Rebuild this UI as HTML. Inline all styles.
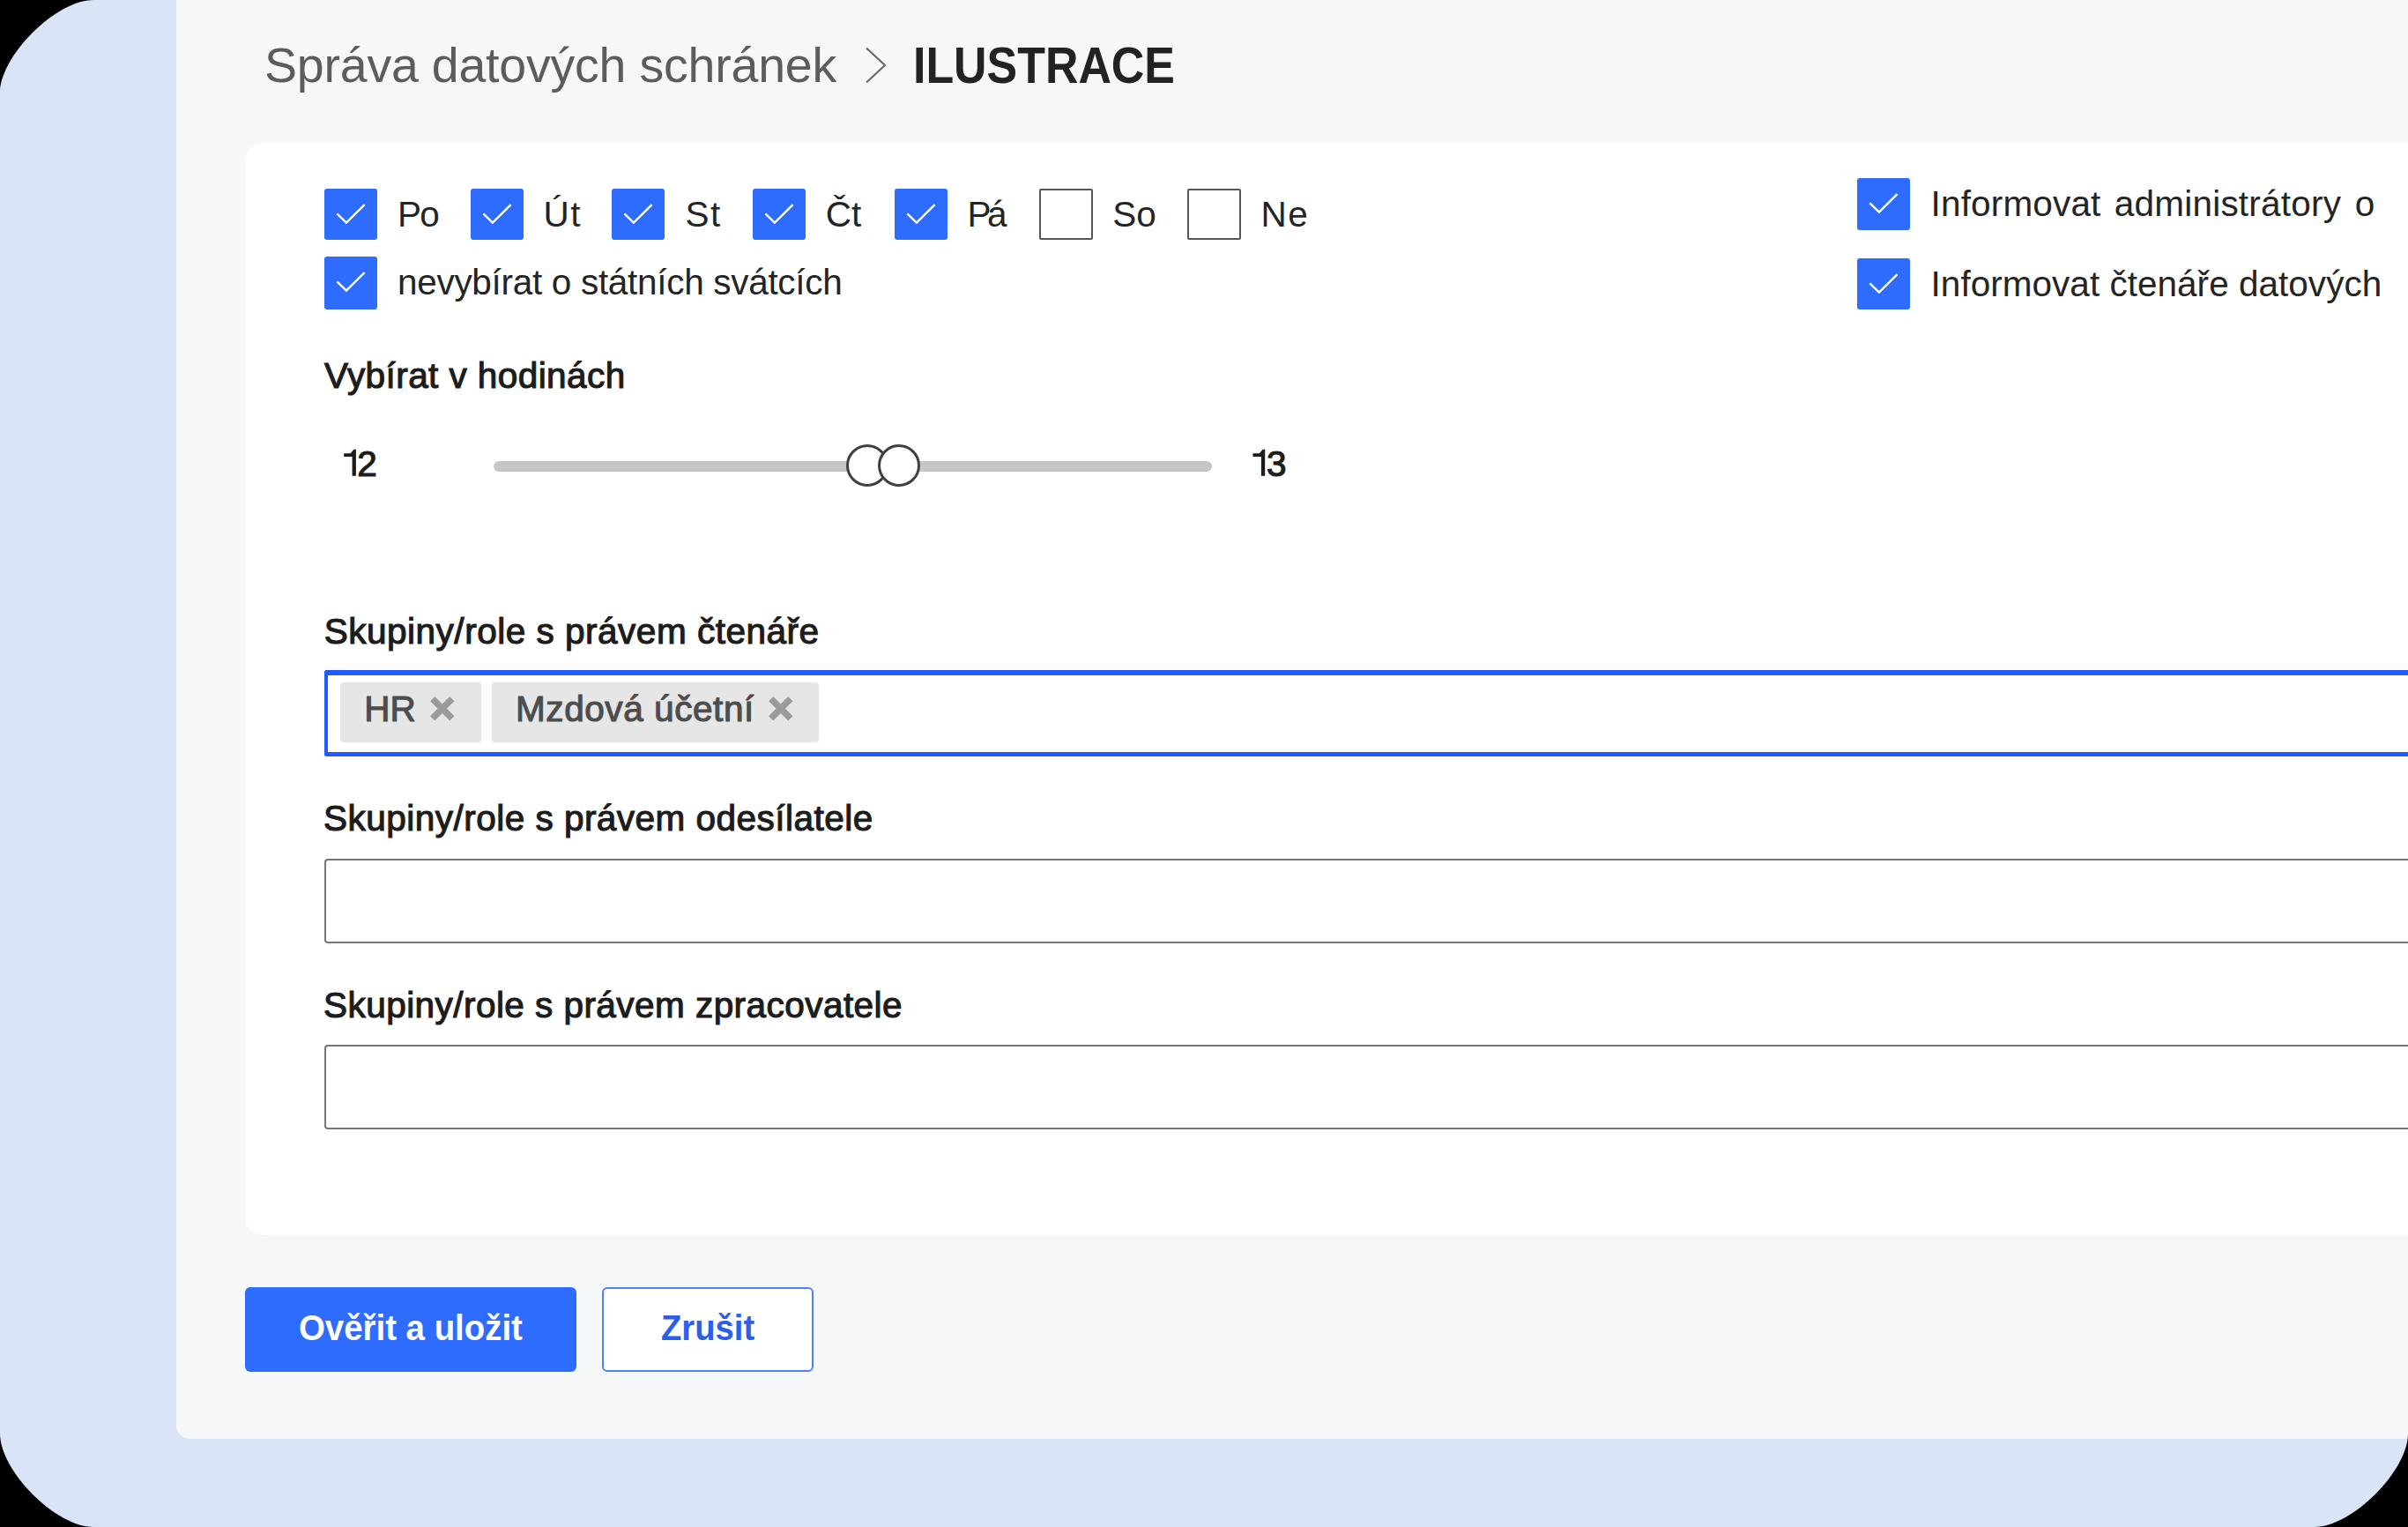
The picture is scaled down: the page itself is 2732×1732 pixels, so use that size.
<!DOCTYPE html>
<html><head><meta charset="utf-8"><style>
html,body{margin:0;padding:0;width:2732px;height:1732px;overflow:hidden;background:#000}
.frame{position:absolute;left:0;top:0;width:2732px;height:1732px;background:#d9e4f6}
.panel{position:absolute;left:200px;top:0;width:2532px;height:1632px;background:#f6f7f9;border-bottom-left-radius:15px;overflow:hidden}
.panel>*{}
.t{position:absolute;white-space:nowrap;font-family:"Liberation Sans",sans-serif}
.cb{position:absolute;background:#2e6bff;border-radius:3px}
.cb svg{position:absolute;left:0;top:0}
.cbu{position:absolute;box-sizing:border-box;border:2.3px solid #555;border-radius:2px;background:#fff}
.thumb{position:absolute;width:48px;height:48px;box-sizing:border-box;border:3px solid #404040;border-radius:50%;background:#fff}
.chip{position:absolute;background:#e6e6e6;border-radius:3.5px}
.inp{position:absolute;left:368px;width:2500px;height:96.5px;box-sizing:border-box;border:2px solid #777;border-right:none;border-radius:4px 0 0 4px;background:#fff}
</style></head><body>
<div class="frame"></div>
<div class="panel"></div>
<div class='t' style='left:300.0px;top:47.3px;font-size:55.5px;line-height:55.5px;font-weight:400;letter-spacing:-0.209px;color:#5c5c5c;'>Správa datových schránek</div>
<svg style='position:absolute;left:978px;top:50px' width='32' height='48' viewBox='0 0 32 48'><path d='M5 4.5 L26 24 L5 43.5' fill='none' stroke='#6a6a6a' stroke-width='2.2'/></svg>
<div class='t' style='left:1035.5px;top:45.6px;font-size:57.5px;line-height:57.5px;font-weight:700;letter-spacing:0.0px;color:#222222;transform:scaleX(0.9025);transform-origin:0 0;'>ILUSTRACE</div>
<div style='position:absolute;left:278px;top:162px;width:2600px;height:1239px;background:#fff;border-radius:21px 0 0 21px'></div>
<div class='cb' style='left:368px;top:214px;width:60px;height:58px'><svg width='60' height='59' viewBox='0 0 60 59'><path d='M14.4 28.4 L24.9 38.6 L45.6 18.2' fill='none' stroke='#fff' stroke-width='2.4'/></svg></div>
<div class='cb' style='left:534px;top:214px;width:60px;height:58px'><svg width='60' height='59' viewBox='0 0 60 59'><path d='M14.4 28.4 L24.9 38.6 L45.6 18.2' fill='none' stroke='#fff' stroke-width='2.4'/></svg></div>
<div class='cb' style='left:694.4px;top:214px;width:60px;height:58px'><svg width='60' height='59' viewBox='0 0 60 59'><path d='M14.4 28.4 L24.9 38.6 L45.6 18.2' fill='none' stroke='#fff' stroke-width='2.4'/></svg></div>
<div class='cb' style='left:854px;top:214px;width:60px;height:58px'><svg width='60' height='59' viewBox='0 0 60 59'><path d='M14.4 28.4 L24.9 38.6 L45.6 18.2' fill='none' stroke='#fff' stroke-width='2.4'/></svg></div>
<div class='cb' style='left:1014.6px;top:214px;width:60px;height:58px'><svg width='60' height='59' viewBox='0 0 60 59'><path d='M14.4 28.4 L24.9 38.6 L45.6 18.2' fill='none' stroke='#fff' stroke-width='2.4'/></svg></div>
<div class='cbu' style='left:1179.2px;top:214px;width:60.5px;height:58px'></div>
<div class='cbu' style='left:1347px;top:214px;width:60.5px;height:58px'></div>
<div class='t' style='left:451.0px;top:223.0px;font-size:40.5px;line-height:40.5px;font-weight:400;letter-spacing:-1.7px;color:#242424;'>Po</div>
<div class='t' style='left:616.5px;top:223.0px;font-size:40.5px;line-height:40.5px;font-weight:400;letter-spacing:1.6px;color:#242424;'>Út</div>
<div class='t' style='left:777.4px;top:223.0px;font-size:40.5px;line-height:40.5px;font-weight:400;letter-spacing:1.6px;color:#242424;'>St</div>
<div class='t' style='left:936.7px;top:223.0px;font-size:40.5px;line-height:40.5px;font-weight:400;letter-spacing:0.0px;color:#242424;'>Čt</div>
<div class='t' style='left:1097.4px;top:223.0px;font-size:40.5px;line-height:40.5px;font-weight:400;letter-spacing:-4.5px;color:#242424;'>Pá</div>
<div class='t' style='left:1262.3px;top:223.0px;font-size:40.5px;line-height:40.5px;font-weight:400;letter-spacing:0.0px;color:#242424;'>So</div>
<div class='t' style='left:1430.5px;top:223.0px;font-size:40.5px;line-height:40.5px;font-weight:400;letter-spacing:1.5px;color:#242424;'>Ne</div>
<div class='cb' style='left:368px;top:291px;width:60px;height:60px'><svg width='60' height='59' viewBox='0 0 60 59'><path d='M14.4 28.4 L24.9 38.6 L45.6 18.2' fill='none' stroke='#fff' stroke-width='2.4'/></svg></div>
<div class='t' style='left:451.0px;top:299.8px;font-size:40.5px;line-height:40.5px;font-weight:400;letter-spacing:-0.304px;color:#242424;'>nevybírat o státních svátcích</div>
<div class='cb' style='left:2107.3px;top:202.3px;width:60px;height:59px'><svg width='60' height='59' viewBox='0 0 60 59'><path d='M14.4 28.4 L24.9 38.6 L45.6 18.2' fill='none' stroke='#fff' stroke-width='2.4'/></svg></div>
<div class='cb' style='left:2107.3px;top:292.5px;width:60px;height:58.6px'><svg width='60' height='59' viewBox='0 0 60 59'><path d='M14.4 28.4 L24.9 38.6 L45.6 18.2' fill='none' stroke='#fff' stroke-width='2.4'/></svg></div>
<div class='t' style='left:2190.6px;top:211.2px;font-size:40.5px;line-height:40.5px;font-weight:400;letter-spacing:0.156px;color:#242424;'>Informovat</div>
<div class='t' style='left:2398.8px;top:211.2px;font-size:40.5px;line-height:40.5px;font-weight:400;letter-spacing:0.215px;color:#242424;'>administrátory</div>
<div class='t' style='left:2671.7px;top:211.2px;font-size:40.5px;line-height:40.5px;font-weight:400;letter-spacing:0px;color:#242424;'>o</div>
<div class='t' style='left:2190.6px;top:301.6px;font-size:40.5px;line-height:40.5px;font-weight:400;letter-spacing:0.023px;color:#242424;'>Informovat čtenáře datových</div>
<div class='t' style='left:368.0px;top:405.8px;font-size:40.5px;line-height:40.5px;font-weight:400;letter-spacing:0.424px;color:#1c1c1c;-webkit-text-stroke:1.15px #1c1c1c;'>Vybírat v hodinách</div>
<div class='t' style='left:405.2px;top:505.7px;font-size:40.5px;line-height:40.5px;font-weight:400;letter-spacing:0px;color:#1c1c1c;-webkit-text-stroke:1.15px #1c1c1c;'>2</div>
<div class='t' style='left:1436.9px;top:505.6px;font-size:40.5px;line-height:40.5px;font-weight:400;letter-spacing:0px;color:#1c1c1c;-webkit-text-stroke:1.15px #1c1c1c;'>3</div>
<svg style='position:absolute;left:0;top:0;overflow:visible' width='1' height='1'><path d='M390.2 514.2 L397.6 514.2 L401.4 509.8 L403.9 509.8 L403.9 539.8 L399.6 539.8 L399.6 517.9 L390.2 517.9 Z' fill='#1c1c1c'/></svg>
<svg style='position:absolute;left:0;top:0;overflow:visible' width='1' height='1'><path d='M1421.5 514.2 L1428.9 514.2 L1432.7 509.8 L1435.2 509.8 L1435.2 539.8 L1430.9 539.8 L1430.9 517.9 L1421.5 517.9 Z' fill='#1c1c1c'/></svg>
<div style='position:absolute;left:560px;top:522.5px;width:815px;height:12.5px;border-radius:6px;background:#c6c6c6'></div>
<div class='thumb' style='left:960px;top:503.8px'></div>
<div class='thumb' style='left:996.4px;top:503.8px'></div>
<div class='t' style='left:367.7px;top:695.8px;font-size:40.5px;line-height:40.5px;font-weight:400;letter-spacing:0.514px;color:#1c1c1c;-webkit-text-stroke:1.15px #1c1c1c;'>Skupiny/role s právem čtenáře</div>
<div style='position:absolute;left:368px;top:760px;width:2500px;height:97.5px;box-sizing:border-box;border:5px solid #1f5bff;border-top-width:6px;border-left-width:4.6px;border-right:none;border-radius:3px 0 0 3px;background:#fff'></div>
<div class='chip' style='left:386px;top:774px;width:159.6px;height:67.6px'></div>
<div class='chip' style='left:558px;top:774px;width:371.4px;height:67.6px'></div>
<div class='t' style='left:413.2px;top:783.6px;font-size:40.5px;line-height:40.5px;font-weight:400;letter-spacing:0.0px;color:#4d4d4d;-webkit-text-stroke:1.15px #4d4d4d;'>HR</div>
<div class='t' style='left:585.0px;top:783.6px;font-size:40.5px;line-height:40.5px;font-weight:400;letter-spacing:0.575px;color:#4d4d4d;-webkit-text-stroke:1.15px #4d4d4d;'>Mzdová účetní</div>
<div style='position:absolute;left:488px;top:790px'><svg width='28' height='28' viewBox='0 0 28 28'><path d='M2.7 2.7 L24.8 24.8 M24.8 2.7 L2.7 24.8' stroke='#9b9b9b' stroke-width='7.4'/></svg></div>
<div style='position:absolute;left:872px;top:790px'><svg width='28' height='28' viewBox='0 0 28 28'><path d='M2.7 2.7 L24.8 24.8 M24.8 2.7 L2.7 24.8' stroke='#9b9b9b' stroke-width='7.4'/></svg></div>
<div class='t' style='left:367.0px;top:907.7px;font-size:40.5px;line-height:40.5px;font-weight:400;letter-spacing:0.484px;color:#1c1c1c;-webkit-text-stroke:1.15px #1c1c1c;'>Skupiny/role s právem odesílatele</div>
<div class='inp' style='top:973.5px'></div>
<div class='t' style='left:367.0px;top:1120.0px;font-size:40.5px;line-height:40.5px;font-weight:400;letter-spacing:0.455px;color:#1c1c1c;-webkit-text-stroke:1.15px #1c1c1c;'>Skupiny/role s právem zpracovatele</div>
<div class='inp' style='top:1184.5px'></div>
<div style='position:absolute;left:278px;top:1460px;width:376px;height:96px;background:#2e6bff;border-radius:6px'></div>
<div class='t' style='left:339.0px;top:1486.0px;font-size:40.5px;line-height:40.5px;font-weight:700;letter-spacing:0.0px;color:#ffffff;transform:scaleX(0.9479);transform-origin:0 0;'>Ověřit a uložit</div>
<div style='position:absolute;left:683px;top:1460px;width:240px;height:96px;box-sizing:border-box;border:2px solid #4d7fff;border-radius:6px;background:#fff'></div>
<div class='t' style='left:750.3px;top:1486.0px;font-size:40.5px;line-height:40.5px;font-weight:700;letter-spacing:0.0px;color:#2d5eea;transform:scaleX(0.9432);transform-origin:0 0;'>Zrušit</div>
<svg style='position:absolute;left:0;top:0' width='2732' height='1732' viewBox='0 0 2732 1732'><g fill='#000'><path d='M0 0 L106 0 C63.60 0 0 63.60 0 106 Z'/><path d='M0 1732 L0 1626 C0 1668.40 63.60 1732 106 1732 Z'/><path d='M2732 1732 L2626 1732 C2668.40 1732 2732 1668.40 2732 1626 Z'/></g></svg>
</body></html>
